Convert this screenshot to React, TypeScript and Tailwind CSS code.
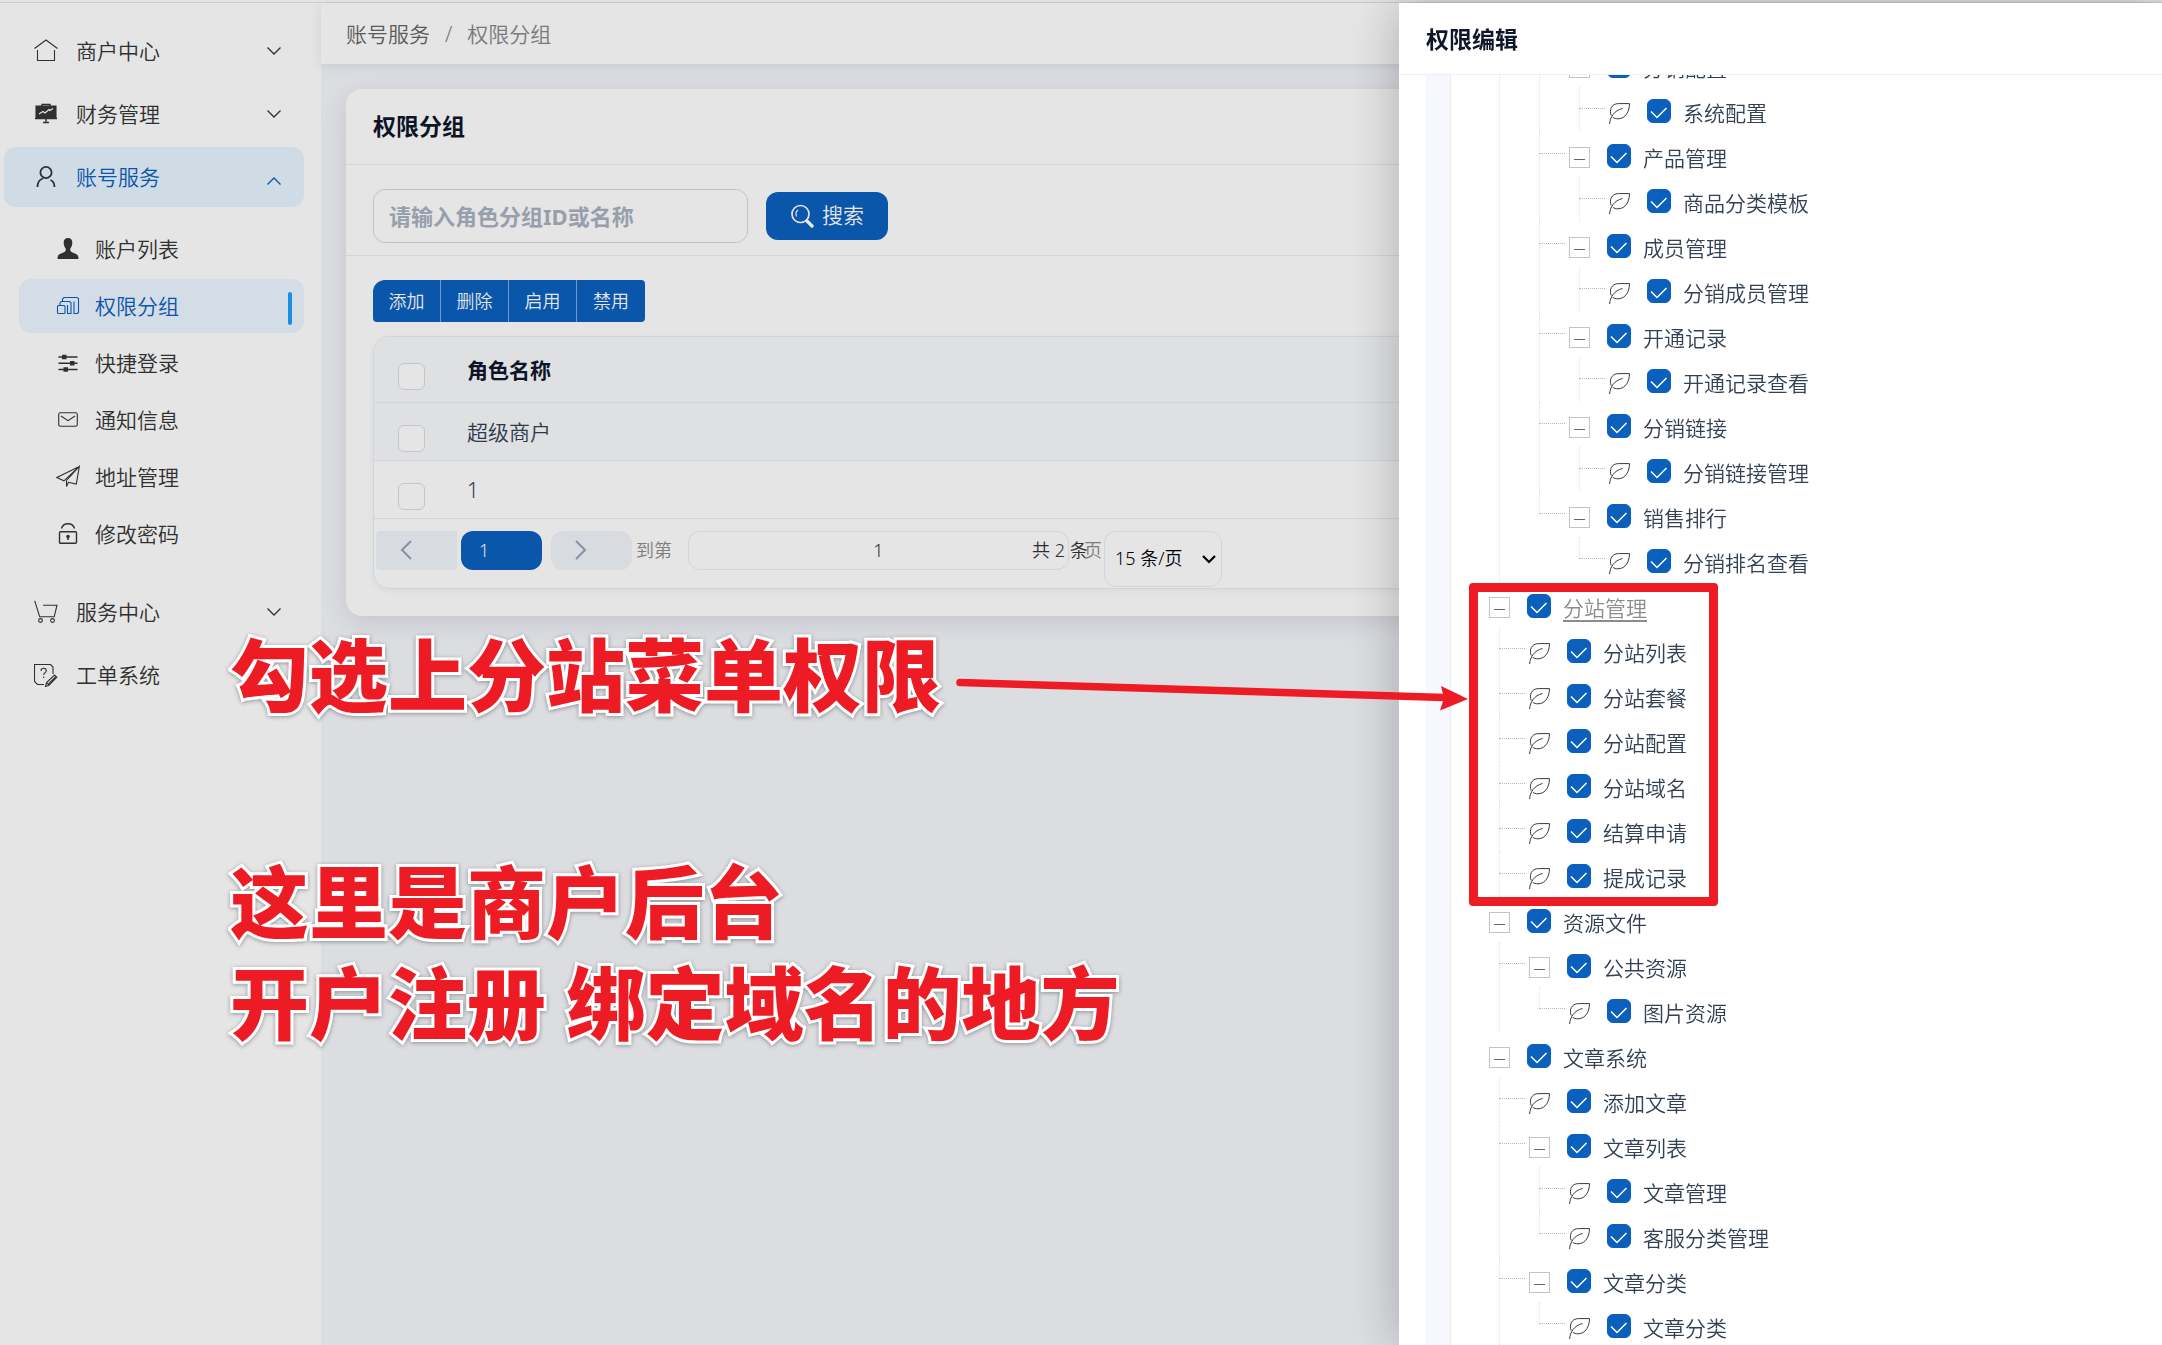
import type { ReactNode } from "react";

type IconProps = { children: ReactNode; className?: string };

function Icon({ children, className = "size-6" }: IconProps) {
  return (
    <svg
      viewBox="0 0 24 24"
      fill="none"
      stroke="currentColor"
      strokeWidth="1.1"
      className={`${className} shrink-0`}
      aria-hidden="true"
    >
      {children}
    </svg>
  );
}

const icons = {
  home: (
    <Icon>
      <path d="M.5 9.5 12 1l11.500 8.500M3.500 11v10.500h17V11" />
    </Icon>
  ),
  board: (
    <Icon>
      <path d="M2 4h20v12H2z" fill="currentColor" />
      <path d="M1 16.500h22M12 16.500v4M9 20.500h6M8 4V2.500h8V4" strokeWidth="1.400" />
      <path d="m5 12 4-2.500 2 1.500 4-3.500 1 1 3-2" stroke="#fff" strokeWidth="1.200" />
    </Icon>
  ),
  user: (
    <Icon>
      <g strokeWidth="1.800">
        <circle cx="12" cy="7.500" r="5.600" />
        <path d="M3.500 22c0-4.500 2-7.500 5.500-8.500M16.500 15c2.500 1 4 3.500 4 7" />
      </g>
    </Icon>
  ),
  person: (
    <Icon>
      <path
        d="M12 1c3 0 4.500 2 4.300 5-.1 2.600-1 4.400-2 5.500v2.300c1 1.700 3 2 5.200 2.900 2.300.9 3 2.300 3 5.300h-21c0-3 .7-4.400 3-5.300 2.200-.9 4.200-1.200 5.200-2.900v-2.300c-1-1.100-1.900-2.900-2-5.500C7.500 3 9 1 12 1Z"
        fill="currentColor"
        stroke="none"
      />
    </Icon>
  ),
  layers: (
    <Icon>
      <rect x="1.500" y="11.500" width="7.500" height="8" rx="1" />
      <path d="M4 11.500V9l1.200-1.500h8.300l1.500 1V19.500h-3.500V11M6.500 7.500V5l1.500-1.500h13l1.500 1V18.500l-1 1h-3.500V7.500" />
    </Icon>
  ),
  sliders: (
    <Icon>
      <path d="M2.500 6h19M2.500 12.200h19M2.500 18.500h19" strokeWidth="1.600" />
      <path d="M6 3.800h4.500v4.500H6zM14 10h4.500v4.500H14zM7.500 16.300H12v4.500H7.500z" fill="currentColor" stroke="none" />
    </Icon>
  ),
  mail: (
    <Icon>
      <rect x="2.700" y="4.700" width="18.600" height="13.600" rx="1.800" />
      <path d="m5 8 7 4.700L19 8" />
    </Icon>
  ),
  plane: (
    <Icon>
      <path d="M23.300 1.500.8 12.500l7.200 3.300L23.300 1.500l-3 17.500-8-1.800M23.300 1.500 10.500 15.500M10.500 15.500v6l2-4.200" />
    </Icon>
  ),
  lock: (
    <Icon>
      <g strokeWidth="1.400">
        <rect x="3.500" y="9.700" width="17" height="11.600" rx="1" />
        <path d="M5.500 6.500c1-3.500 4-4.800 6.500-4.800s5.500 1.300 6.500 4.800" />
      </g>
      <circle cx="12" cy="14.500" r="1.800" fill="currentColor" stroke="none" />
      <path d="M12 15v3" strokeWidth="1.600" />
    </Icon>
  ),
  cart: (
    <Icon>
      <path d="m.7.800 5 16h14.500L23 5.200H9" />
      <circle cx="6.500" cy="20.500" r="1.900" />
      <circle cx="18.500" cy="20.500" r="1.900" />
    </Icon>
  ),
  ticket: (
    <Icon>
      <path d="M10 21.500H3.500l-3-3V1.500h16l2.500 2.500v7" />
      <path d="M7 8c0-1.700 1-2.700 2.700-2.700s2.600 1 2.600 2.400c0 1.900-2.600 2.100-2.600 4.300M9.700 13.500v1.500" />
      <path d="m11.500 23.500 1-4 8-7.500 2.300 2.300-7.800 8Zm1-4 2.500 2.800M14.500 21l7-7" />
    </Icon>
  ),
};

function Chevron({ up = false }: { up?: boolean }) {
  return (
    <svg viewBox="0 0 14 8" className="h-2 w-3.5 shrink-0" fill="none" stroke="currentColor" strokeWidth="1.300" aria-hidden="true">
      <path d={up ? "M.5 7.500 7 1l6.500 6.500" : "M.5.500 7 7 13.500.500"} />
    </svg>
  );
}

type NavItem = { label: string; icon: ReactNode; arrow?: boolean };

const topNav: NavItem[] = [
  { label: "商户中心", icon: icons.home, arrow: true },
  { label: "财务管理", icon: icons.board, arrow: true },
];

const subNav: NavItem[] = [
  { label: "账户列表", icon: icons.person },
  { label: "权限分组", icon: icons.layers },
  { label: "快捷登录", icon: icons.sliders },
  { label: "通知信息", icon: icons.mail },
  { label: "地址管理", icon: icons.plane },
  { label: "修改密码", icon: icons.lock },
];

const bottomNav: NavItem[] = [
  { label: "服务中心", icon: icons.cart, arrow: true },
  { label: "工单系统", icon: icons.ticket },
];

function NavLink({ item }: { item: NavItem }) {
  return (
    <li>
      <a href="#" className="flex h-[60px] items-center rounded-xl pr-[23px] pl-[30px]">
        {item.icon}
        <span className="ml-[18px] grow">{item.label}</span>
        {item.arrow && <Chevron />}
      </a>
    </li>
  );
}

function Sidebar() {
  return (
    <nav className="w-[321px] shrink-0 bg-white pt-[18px] pr-[17px] pl-1 text-[21px] leading-8 text-[#363636]">
      <ul className="flex flex-col gap-[3px]">
        {topNav.map((item) => (
          <NavLink key={item.label} item={item} />
        ))}
        <li>
          <a href="#" className="flex h-[60px] items-center rounded-xl bg-[#e7f4ff] pr-[23px] pl-[30px]">
            {icons.user}
            <span className="ml-[18px] grow text-[#0b60be]">账号服务</span>
            <span className="pt-2 text-[#0b60be]">
              <Chevron up />
            </span>
          </a>
          <ul className="mt-[15px] mb-[18px] ml-[15px] flex flex-col gap-[3px]">
            {subNav.map((item) => {
              const active = item.label === "权限分组";
              return (
                <li key={item.label}>
                  <a
                    href="#"
                    className={`flex h-[54px] items-center rounded-xl pr-3 pl-[37px] ${active ? "bg-[#edf6ff] text-[#0b60be]" : ""}`}
                  >
                    {item.icon}
                    <span className="ml-[15px] grow">{item.label}</span>
                    {active && <span className="mt-1 h-[33px] w-1 rounded-sm bg-[#1e9fff]" />}
                  </a>
                </li>
              );
            })}
          </ul>
        </li>
        {bottomNav.map((item) => (
          <NavLink key={item.label} item={item} />
        ))}
      </ul>
    </nav>
  );
}

function RowCheck({ label }: { label: string }) {
  return (
    <input
      type="checkbox"
      aria-label={label}
      className="mt-[15px] block size-[27px] appearance-none rounded-md border border-[#d8dbe6] bg-white checked:bg-[#0b60be]"
    />
  );
}

function RoleTable() {
  return (
    <table className="w-full border-collapse text-left text-[21px] leading-8">
      <thead>
        <tr className="h-[65px] border-b border-[#e9ecf3] bg-[#f8fafc]">
          <th scope="col" className="w-[69px] pl-6">
            <RowCheck label="全选" />
          </th>
          <th scope="col" className="pt-0.5 pl-6 font-bold text-[#0f172a]">
            角色名称
          </th>
        </tr>
      </thead>
      <tbody className="text-[#334155]">
        <tr className="h-[58px] border-b border-[#e9ecf3] bg-[#f8fafc]">
          <td className="pl-6">
            <RowCheck label="选择 超级商户" />
          </td>
          <td className="pt-0.5 pl-6">超级商户</td>
        </tr>
        <tr className="h-[58px] border-b border-[#e9ecf3]">
          <td className="pl-6">
            <RowCheck label="选择 1" />
          </td>
          <td className="pt-0.5 pl-6">1</td>
        </tr>
      </tbody>
    </table>
  );
}

function Pagination() {
  return (
    <div className="flex h-[69px] items-start pt-3 pl-0.5 text-lg leading-[39px]">
      <button type="button" aria-label="上一页" className="flex h-[39px] w-[81px] items-center rounded-l bg-[#f1f4f9] pl-6 text-[#94a3b8]">
        <svg viewBox="0 0 12 20" className="h-5 w-3" fill="none" stroke="currentColor" strokeWidth="2" aria-hidden="true">
          <path d="M11 1 2 10l9 9" />
        </svg>
      </button>
      <button type="button" className="ml-1 h-[39px] w-[81px] rounded-xl bg-[#0b60be] pl-[18px] text-left text-white">
        1
      </button>
      <button type="button" aria-label="下一页" className="ml-[9px] flex h-[39px] w-[81px] items-center rounded-xl bg-[#f1f4f9] pl-6 text-[#94a3b8]">
        <svg viewBox="0 0 12 20" className="h-5 w-3" fill="none" stroke="currentColor" strokeWidth="2" aria-hidden="true">
          <path d="m1 1 9 9-9 9" />
        </svg>
      </button>
      <span className="ml-1 text-[#8c8c8c]">到第</span>
      <div className="relative ml-4">
        <input
          aria-label="页码"
          defaultValue="1"
          className="h-[39px] w-[381px] rounded-xl border border-[#e9ecf3] bg-transparent text-center text-[#333]"
        />
        <span className="absolute top-0 left-[344px] whitespace-nowrap text-[#333]">共 2 条</span>
      </div>
      <span className="ml-[15px] text-[#8c8c8c]">页</span>
      <div className="relative ml-0.5">
        <select
          aria-label="每页条数"
          className="h-14 w-[118px] appearance-none rounded-xl border border-[#e9ecf3] bg-transparent pl-2.5 text-black"
        >
          <option>15 条/页</option>
        </select>
        <svg viewBox="0 0 14 9" className="pointer-events-none absolute top-6 right-1.5 h-[9px] w-3.5" fill="none" stroke="#000" strokeWidth="2.200" aria-hidden="true">
          <path d="m1 1 6 6 6-6" />
        </svg>
      </div>
    </div>
  );
}

const actions = ["添加", "删除", "启用", "禁用"];

function Main() {
  return (
    <main className="flex min-w-0 grow flex-col bg-[#f5f6fa]">
      <header className="flex h-[61px] shrink-0 items-center gap-[15px] bg-white pl-[25px] text-[21px] leading-8 text-[#888] shadow-[0_2px_10px_rgba(60,70,130,0.12)]">
        <a href="#" className="text-[#666]">
          账号服务
        </a>
        <span>/</span>
        <span>权限分组</span>
      </header>
      <section className="mt-[25px] mr-6 ml-[25px] rounded-2xl bg-white shadow-[0_6px_24px_rgba(40,50,90,0.12)]">
        <h1 className="flex h-[76px] items-center border-b border-[#ecedf4] pl-[27px] text-[23px] font-bold text-[#0f172a]">权限分组</h1>
        <form className="flex h-[91px] items-center gap-[18px] border-b border-[#eceef2] pb-3 pl-[27px] pt-6">
          <input
            aria-label="角色分组ID或名称"
            placeholder="请输入角色分组ID或名称"
            className="h-[54px] w-[375px] rounded-xl border border-[#d5dae3] bg-white pl-[15px] text-[22px] placeholder:font-bold placeholder:text-[#a9b2c1]"
          />
          <button type="button" className="flex h-12 w-[122px] items-center justify-center gap-2 rounded-xl bg-[#0b60be] text-[21px] text-white">
            <Icon>
              <circle cx="10.500" cy="10" r="8.500" strokeWidth="1.700" />
              <path d="M6.500 12.500c-1-2.500-.5-5 1.500-6.500" strokeWidth="1.200" />
              <path d="m17 17 5 5" strokeWidth="3.400" strokeLinecap="round" />
            </Icon>
            搜索
          </button>
        </form>
        <div className="pt-6 pl-[27px] pb-[27px]">
          <div className="flex w-max divide-x divide-[#7fabdc] overflow-hidden rounded-sm rounded-tl-xl bg-[#0b60be] text-lg text-white">
            {actions.map((name) => (
              <button key={name} type="button" className="h-[42px] w-[68px]">
                {name}
              </button>
            ))}
          </div>
          <div className="mt-[14px] mr-6 overflow-hidden rounded-2xl border border-[#e9ecf3] shadow-[0_2px_6px_rgba(40,50,90,0.06)]">
            <RoleTable />
            <Pagination />
          </div>
        </div>
      </section>
    </main>
  );
}

type TreeNode = {
  label?: string;
  children?: TreeNode[];
  /* the guide line stops at this node's connector */
  end?: boolean;
  muted?: boolean;
  marked?: boolean;
};

const tree: TreeNode[] = [
  {
    children: [
      {
        children: [
          { label: "分销配置", children: [{ label: "系统配置" }] },
          { label: "产品管理", children: [{ label: "商品分类模板" }] },
          { label: "成员管理", children: [{ label: "分销成员管理" }] },
          { label: "开通记录", children: [{ label: "开通记录查看" }] },
          { label: "分销链接", children: [{ label: "分销链接管理" }] },
          { label: "销售排行", end: true, children: [{ label: "分销排名查看", end: true }] },
        ],
      },
    ],
  },
  {
    label: "分站管理",
    muted: true,
    marked: true,
    children: [
      { label: "分站列表" },
      { label: "分站套餐" },
      { label: "分站配置" },
      { label: "分站域名" },
      { label: "结算申请" },
      { label: "提成记录" },
    ],
  },
  {
    label: "资源文件",
    children: [{ label: "公共资源", children: [{ label: "图片资源", end: true }] }],
  },
  {
    label: "文章系统",
    children: [
      { label: "添加文章" },
      { label: "文章列表", children: [{ label: "文章管理" }, { label: "客服分类管理", end: true }] },
      { label: "文章分类", children: [{ label: "文章分类", end: true }] },
    ],
  },
];

function Leaf() {
  return (
    <svg viewBox="0 0 21 21" className="mt-2 size-[21px] shrink-0" fill="none" stroke="#3a3a3a" strokeWidth="1" aria-hidden="true">
      <path d="M.6 21C1 14.500 5 7.500 13.500 5.500M2.200 12.500C0 7 2.500 .600 9.500 .600h11c0 7-3.500 15.200-11.500 15.200-2 0-4-.5-5.200-1.600" />
    </svg>
  );
}

function Branch({ node, depth }: { node: TreeNode; depth: number }) {
  const guide = node.end ? "before:h-[22px]" : "before:h-full";
  const lines = depth > 0 ? `before:absolute before:top-0 before:-left-[30px] before:border-l before:border-dotted before:border-[#dfe2ea] ${guide}` : "";
  return (
    <li className={`relative ${lines}`}>
      {node.label && (
        <div className="relative flex h-[45px] items-center">
          {depth > 0 && <span className="absolute top-[21px] -left-[30px] w-[26px] border-t border-dotted border-[#b4b8c6]" />}
          {node.children ? (
            <button
              type="button"
              aria-label={`收起 ${node.label}`}
              className="mt-1.5 flex size-[21px] shrink-0 items-center justify-center border border-[#c0c4cc]"
            >
              <span className="mt-1 h-px w-[11px] bg-[#666]" />
            </button>
          ) : (
            <Leaf />
          )}
          <label className="flex items-center">
            <span className="relative mt-0.5 ml-[17px] flex size-6">
              <input type="checkbox" defaultChecked className="peer size-6 appearance-none rounded-md border border-[#d8dbe6] checked:border-[#0b60be] checked:bg-[#0b60be]" />
              <svg viewBox="0 0 24 24" className="pointer-events-none absolute inset-0 hidden size-6 peer-checked:block" fill="none" stroke="#fff" strokeWidth="1.500" aria-hidden="true">
                <path d="m4 12.500 6 6L19.500 9" />
              </svg>
            </span>
            <span className={`mt-1.5 ml-3 whitespace-nowrap ${node.muted ? "text-[#8c8c8c] underline underline-offset-4" : ""}`}>{node.label}</span>
          </label>
        </div>
      )}
      {node.children && (
        <ul className="ml-10">
          {node.children.map((child, i) => (
            <Branch key={i} node={child} depth={depth + 1} />
          ))}
        </ul>
      )}
      {node.marked && <div className="pointer-events-none absolute top-px -bottom-[9px] -left-5 z-10 w-[249px] rounded border-[9px] border-[#ed1c24]" />}
    </li>
  );
}

function Drawer() {
  return (
    <aside className="fixed top-[3px] right-0 bottom-0 flex w-[763px] flex-col bg-white shadow-[0_0_50px_rgba(0,0,0,0.25)]">
      <h2 className="flex h-[72px] shrink-0 items-center border-b border-[#eef0f3] pt-0.5 pl-[27px] text-[23px] font-bold text-[#0f172a]">权限编辑</h2>
      <div className="flex min-h-0 grow overflow-hidden pl-[27px]">
        <div className="w-[25px] shrink-0 border-r border-[#e9edf5] bg-[#f6f8fd]" />
        <ul className="-mt-[33px] h-max pl-[38px] text-[21px] leading-8 text-[#334155]">
          {tree.map((node, i) => (
            <Branch key={i} node={node} depth={0} />
          ))}
        </ul>
      </div>
    </aside>
  );
}

function Notes() {
  return (
    <div className="pointer-events-none">
      <div className="absolute top-[625px] left-[230px] text-[79px] leading-[101px] font-black whitespace-nowrap text-[#ed1c24] [-webkit-text-stroke:6px_white] [filter:drop-shadow(0_1px_2px_rgba(0,0,0,0.35))] [paint-order:stroke_fill]">
        <p>勾选上分站菜单权限</p>
        <p className="mt-[126px]">这里是商户后台</p>
        <p>开户注册 绑定域名的地方</p>
      </div>
      <svg viewBox="0 0 520 40" className="absolute top-[674px] right-[692px] h-10 w-[520px]" fill="#ed1c24" aria-hidden="true">
        <path d="M10 8.500 494 23.500" stroke="#ed1c24" strokeWidth="7.500" strokeLinecap="round" />
        <path d="M491 12 518 25l-28 11.500 4-12.500Z" />
      </svg>
    </div>
  );
}

export default function App() {
  return (
    <div className="flex min-h-screen flex-col bg-white font-[350] [font-family:'Noto_Sans','Noto_Sans_CJK_SC',sans-serif]">
      <div className="h-[3px] shrink-0 border-b border-[#e4e5f0]" />
      <div className="flex grow">
        <Sidebar />
        <Main />
      </div>
      <div className="fixed inset-0 bg-black/10" />
      <Drawer />
      <Notes />
    </div>
  );
}
